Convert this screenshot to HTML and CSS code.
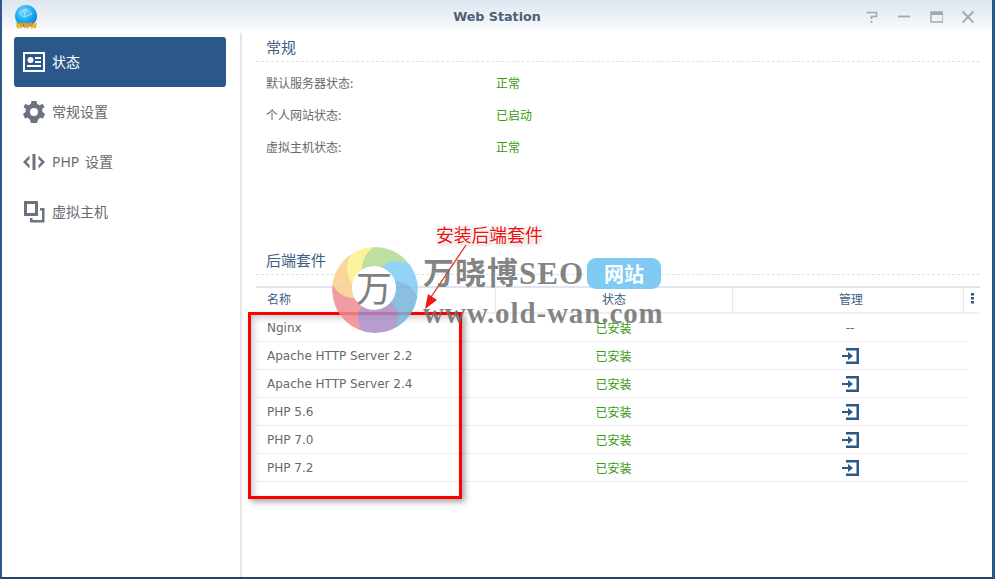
FILE: index.html
```html
<!DOCTYPE html>
<html>
<head>
<meta charset="utf-8">
<title>Web Station</title>
<link rel="stylesheet" href="styles.css">
</head>
<body>
<div class="window">
  <div class="titlebar">
    <svg class="appIcon" width="24" height="24" viewBox="0 0 24 24">
      <defs>
        <radialGradient id="globe" cx="0.4" cy="0.3" r="0.8">
          <stop offset="0" stop-color="#6fd6fb"/>
          <stop offset="0.6" stop-color="#14a3ee"/>
          <stop offset="1" stop-color="#0b6fd0"/>
        </radialGradient>
      </defs>
      <circle cx="12" cy="11" r="11" fill="url(#globe)"/>
      <path d="M5 8 L12 4 L18 9 M12 4 L10 12 M5 8 L10 12 L18 9" fill="none" stroke="#c9f0ff" stroke-width="0.7"/>
      <text x="12.500" y="23" class="appIconText" text-anchor="middle" textLength="21" lengthAdjust="spacingAndGlyphs">www</text>
    </svg>
    <div class="title">Web Station</div>
    <div class="winButtons">
      <svg width="14" height="14" viewBox="0 0 14 14"><path d="M1.5 2.5H11.5V6.5H6.5V9M6.5 11V13" fill="none" stroke="#a4a9b0" stroke-width="1.6"/></svg>
      <svg width="14" height="14" viewBox="0 0 14 14"><path d="M1 6.5H13" stroke="#a4a9b0" stroke-width="1.8"/></svg>
      <svg width="14" height="14" viewBox="0 0 14 14"><path d="M2 2H14V12H2Z" fill="none" stroke="#a4a9b0" stroke-width="1.4"/><path d="M2 3.5H14" stroke="#a4a9b0" stroke-width="3"/></svg>
      <svg width="14" height="14" viewBox="0 0 14 14"><path d="M1.5 1.5L12.5 12.5M12.5 1.5L1.5 12.5" stroke="#a4a9b0" stroke-width="1.8"/></svg>
    </div>
  </div>

  <div class="body">
    <div class="sidebar">
      <div class="navItem selected">
        <svg width="22" height="20" viewBox="0 0 22 20"><path fill-rule="evenodd" fill="#fff" d="M0 0H22V20H0ZM2 2V18H20V2ZM4 13H18V15H4ZM12 5H18V7H12ZM12 9H18V11H12Z"/><circle cx="7.5" cy="8" r="3" fill="#fff"/></svg>
        <span>状态</span>
      </div>
      <div class="navItem">
        <svg width="22" height="22" viewBox="0 0 22 22"><path fill-rule="evenodd" fill="#6b7280" d="M8.5 0H13.5L14.2 3L16.8 4.2L19.5 2.8L21.5 6L19.2 8L19.5 11L22 13L20 17.5L17 16.8L15 18.8L14 22H8L7 18.8L5 16.8L2 17.5L0 13L2.5 11L2.8 8L.5 6L2.5 2.800L5.200 4.200L7.800 3ZM11 7A4 4 0 1 0 11 15A4 4 0 1 0 11 7Z"/></svg>
        <span>常规设置</span>
      </div>
      <div class="navItem">
        <svg width="22" height="16" viewBox="0 0 22 16"><path fill="#6b7280" d="M6.500 1.500V5L3.500 8L6.500 11V14.500L0 8ZM15.500 1.500L22 8L15.500 14.500V11L18.500 8L15.500 5ZM9.500 0H12.500V16H9.500Z"/></svg>
        <span>PHP 设置</span>
      </div>
      <div class="navItem">
        <svg width="22" height="22" viewBox="0 0 22 22"><path fill-rule="evenodd" fill="#6b7280" d="M1 0H15V15H1ZM4 3V12H12V3Z"/><path fill="#6b7280" d="M17 7H21.500V21.500H7V17H9.500V19H19V9.500H17Z"/></svg>
        <span>虚拟主机</span>
      </div>
    </div>

    <div class="main">
      <div class="sectionTitle">常规</div>
      <div class="infoRow"><div class="infoLabel">默认服务器状态:</div><div class="ok">正常</div></div>
      <div class="infoRow"><div class="infoLabel">个人网站状态:</div><div class="ok">已启动</div></div>
      <div class="infoRow"><div class="infoLabel">虚拟主机状态:</div><div class="ok">正常</div></div>

      <div class="sectionTitle second">后端套件</div>
      <div class="grid">
        <div class="gridHead">
          <div class="colName">名称</div>
          <div class="colStatus">状态</div>
          <div class="colManage">管理</div>
          <div class="colMenu"><svg width="3" height="11" viewBox="0 0 3 11"><path fill="#2b5789" d="M0 0H3V2.500H0ZM0 4H3V6.500H0ZM0 8H3V10.500H0Z"/></svg></div>
        </div>
        <div class="gridRow">
          <div class="cellName">Nginx</div><div class="cellStatus ok">已安装</div><div class="cellManage dash">--</div>
        </div>
        <div class="gridRow">
          <div class="cellName">Apache HTTP Server 2.2</div><div class="cellStatus ok">已安装</div>
          <div class="cellManage"><svg class="enter" width="17" height="16" viewBox="0 0 17 16"><use href="#enterIcon"/></svg></div>
        </div>
        <div class="gridRow">
          <div class="cellName">Apache HTTP Server 2.4</div><div class="cellStatus ok">已安装</div>
          <div class="cellManage"><svg class="enter" width="17" height="16" viewBox="0 0 17 16"><use href="#enterIcon"/></svg></div>
        </div>
        <div class="gridRow">
          <div class="cellName">PHP 5.6</div><div class="cellStatus ok">已安装</div>
          <div class="cellManage"><svg class="enter" width="17" height="16" viewBox="0 0 17 16"><use href="#enterIcon"/></svg></div>
        </div>
        <div class="gridRow">
          <div class="cellName">PHP 7.0</div><div class="cellStatus ok">已安装</div>
          <div class="cellManage"><svg class="enter" width="17" height="16" viewBox="0 0 17 16"><use href="#enterIcon"/></svg></div>
        </div>
        <div class="gridRow">
          <div class="cellName">PHP 7.2</div><div class="cellStatus ok">已安装</div>
          <div class="cellManage"><svg class="enter" width="17" height="16" viewBox="0 0 17 16"><use href="#enterIcon"/></svg></div>
        </div>
      </div>
    </div>
  </div>

  <!-- annotation drawn over the screenshot -->
  <div class="redBox"></div>
  <svg class="marks" width="995" height="579" viewBox="0 0 995 579">
    <defs>
      <clipPath id="ring"><circle cx="375" cy="290" r="43"/></clipPath>
    </defs>
    <g clip-path="url(#ring)" opacity="0.85">
      <circle cx="375" cy="290" r="43" fill="#f08a90"/>
      <circle cx="354" cy="274" r="24" fill="#f9cf8c"/>
      <circle cx="372" cy="268" r="25" fill="#fbf08a"/>
      <circle cx="388" cy="269" r="26" fill="#b3da90"/>
      <circle cx="397" cy="286" r="25" fill="#7fcdf5"/>
      <circle cx="394" cy="306" r="25" fill="#77b4dd"/>
      <circle cx="378" cy="318" r="20" fill="#a98cc6"/>
    </g>
    <circle cx="374" cy="288" r="22" fill="#fff"/>
    <text x="374" y="302" class="wmBadge" text-anchor="middle">万</text>
    <path d="M466 245L429 300" stroke="#f01818" stroke-width="1.200"/>
    <path d="M425 309L428 294L437 300Z" fill="#f01818"/>
  </svg>
  <div class="wmName">万晓博SEO</div>
  <div class="wmPill">网站</div>
  <div class="wmUrl">www.old-wan.com</div>
  <div class="callout">安装后端套件</div>
</div>
</body>
<svg width="0" height="0" class="defs"><symbol id="enterIcon" viewBox="0 0 17 16"><path fill="#2b5789" d="M4 0H17V16H4V13.500H14.500V2.500H4ZM0 7H6V4L11 8L6 12V9H0Z"/></symbol></svg>
</html>
```

FILE: styles.css
```css
html, body {
	margin: 0;
	padding: 0;
	background-color: #fff;
}
body {
	font-family: "DejaVu Sans", "Noto Sans CJK SC", sans-serif;
	font-size: 12px;
	color: #66696e;
}
.defs {
	display: block;
	height: 0;
}

.window {
	position: relative;
	width: 995px;
	height: 579px;
	box-sizing: border-box;
	border-left: 2px solid #2b5789;
	border-right: 3px solid #2b5789;
	border-bottom: 2px solid #24456b;
	overflow: hidden;
	display: flex;
	flex-direction: column;
}

/* Title bar */
.titlebar {
	height: 33px;
	flex: none;
	display: flex;
	align-items: center;
	position: relative;
	background: linear-gradient(#dfe6ef, #f3f6f9 75%, #fff);
}
.appIcon {
	margin-left: 12px;
	margin-top: 1px;
}
.appIconText {
	font-family: "DejaVu Sans", sans-serif;
	font-size: 8px;
	font-weight: bold;
	fill: #f5a800;
	stroke: #f5a800;
	stroke-width: 0.3px;
}
.title {
	position: absolute;
	left: 0;
	right: 0;
	text-align: center;
	font-size: 12.7px;
	font-weight: bold;
	color: #4b5f78;
}
.winButtons {
	margin-left: auto;
	margin-right: 17px;
	display: flex;
	gap: 18px;
}

.body {
	flex: 1;
	display: flex;
	min-height: 0;
}

/* Left navigation */
.sidebar {
	width: 240px;
	flex: none;
	box-sizing: border-box;
	border-right: 2px solid #e6e6e6;
	padding: 4px 14px 0 12px;
}
.navItem {
	height: 50px;
	display: flex;
	align-items: center;
	gap: 7px;
	padding-left: 9px;
	font-family: "Noto Sans", "Noto Sans CJK SC", sans-serif;
	font-size: 14px;
	word-spacing: 2px;
	color: #66696e;
}
.navItem span {
	padding-bottom: 3px;
}
.navItem svg {
	flex: none;
}
.navItem.selected {
	background-color: #2b5789;
	border-radius: 3px;
	color: #fff;
}

/* Right pane */
.main {
	flex: 1;
	padding: 5px 12px 0 14px;
	min-width: 0;
}
.sectionTitle {
	height: 23px;
	line-height: 18px;
	padding-left: 10px;
	font-family: "Noto Sans CJK SC", sans-serif;
	font-size: 15px;
	color: #3e5e85;
	border-bottom: 1px dashed #dde2e8;
}
.sectionTitle.second {
	margin-top: 89px;
}
.infoRow {
	display: flex;
	height: 32px;
	align-items: center;
	padding-left: 10px;
	font-family: "Noto Sans CJK SC", sans-serif;
	font-size: 12px;
}
.infoLabel {
	width: 230px;
}
.sectionTitle + .infoRow {
	margin-top: 4px;
}
.ok {
	color: #3a9a10;
	font-family: "Noto Sans CJK SC", sans-serif;
}

/* Package table */
.grid {
	margin-top: 11px;
}
.gridHead {
	display: flex;
	height: 24px;
	border-top: 2px solid #dce5f0;
	border-bottom: 2px solid #eef0f3;
	font-family: "Noto Sans CJK SC", sans-serif;
	color: #3e5e85;
}
.gridHead > div {
	height: 24px;
	line-height: 22px;
	box-sizing: border-box;
}
.colName {
	width: 240px;
	padding-left: 11px;
	border-right: 1px solid #e2eaf4;
}
.colStatus {
	width: 237px;
	text-align: center;
	border-right: 1px solid #e2eaf4;
}
.colManage {
	width: 231px;
	padding-left: 6px;
	text-align: center;
	border-right: 1px solid #e2eaf4;
}
.colMenu {
	flex: 1;
	text-align: center;
}
.gridRow {
	display: flex;
	align-items: center;
	height: 27px;
	margin-right: 12px;
	border-bottom: 1px solid #eceef1;
}
.cellName {
	width: 239px;
	box-sizing: border-box;
	padding-left: 11px;
}
.cellStatus {
	width: 237px;
	text-align: center;
}
.cellManage {
	flex: 1;
	text-align: center;
}
.dash {
	color: #66696e;
}
.enter {
	display: block;
	margin: 0 auto;
}

/* Annotation and watermark */
.redBox {
	position: absolute;
	left: 246px;
	top: 312px;
	width: 208px;
	height: 181px;
	border: 3px solid #f00;
	box-shadow: 3px 3px 6px rgba(0, 0, 0, 0.35), inset 3px 3px 6px rgba(0, 0, 0, 0.2);
}
.marks {
	position: absolute;
	left: -2px;
	top: 0;
}
.wmBadge {
	font-family: "Noto Sans CJK SC", sans-serif;
	font-size: 36px;
	fill: #808080;
}
.wmName {
	position: absolute;
	left: 421px;
	top: 254px;
	font-family: "Liberation Serif", "Noto Sans CJK SC", serif;
	font-size: 31px;
	line-height: 40px;
	font-weight: bold;
	letter-spacing: 1px;
	color: rgba(110, 110, 110, 0.85);
	white-space: nowrap;
}
.wmPill {
	position: absolute;
	left: 585px;
	top: 258px;
	width: 74px;
	height: 31px;
	line-height: 31px;
	border-radius: 9px;
	text-align: center;
	background-color: #7fcbf3;
	color: #fff;
	font-family: "Noto Sans CJK SC", sans-serif;
	font-size: 20px;
	font-weight: bold;
}
.wmUrl {
	position: absolute;
	left: 421px;
	top: 296px;
	font-family: "Liberation Serif", serif;
	font-size: 29px;
	line-height: 34px;
	font-weight: bold;
	letter-spacing: 0.9px;
	color: rgba(110, 110, 110, 0.85);
	white-space: nowrap;
}
.callout {
	position: absolute;
	left: 434px;
	top: 222px;
	font-family: "Noto Sans CJK SC", sans-serif;
	font-size: 17.800px;
	line-height: 24px;
	color: #f01010;
	white-space: nowrap;
	text-shadow: 0 0 2px #fff, 0 0 3px #fff, 0 0 4px #fff, 0 0 4px #fff, 1px 1px 4px rgba(0, 0, 0, 0.45);
}
```
